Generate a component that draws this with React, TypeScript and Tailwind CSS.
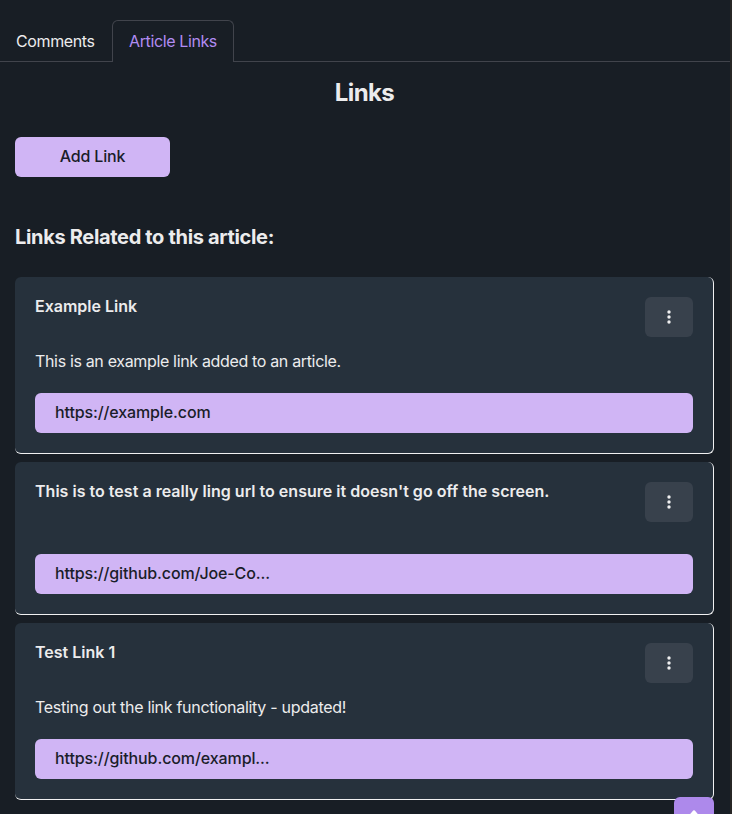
type Link = { title: string; description: string; url: string; titleClass: string; textClass: string; urlClass: string };

const links: Link[] = [
  {
    title: "Example Link",
    description: "This is an example link added to an article.",
    url: "https://example.com",
    titleClass: "tracking-normal",
    textClass: "tracking-[-0.34px]",
    urlClass: "tracking-[-0.12px]",
  },
  {
    title: "This is to test a really ling url to ensure it doesn't go off the screen.",
    description: "",
    url: "https://github.com/Joe-Co...",
    titleClass: "tracking-[0.02px]",
    textClass: "tracking-normal",
    urlClass: "tracking-[-0.12px]",
  },
  {
    title: "Test Link 1",
    description: "Testing out the link functionality - updated!",
    url: "https://github.com/exampl...",
    titleClass: "tracking-normal",
    textClass: "tracking-[-0.29px]",
    urlClass: "tracking-[-0.1px]",
  },
];

function MenuIcon() {
  return (
    <svg width="16" height="16" viewBox="0 0 16 16" fill="#f0f0f1" aria-hidden="true">
      <circle cx="8" cy="3" r="1.7" />
      <circle cx="8" cy="8" r="1.7" />
      <circle cx="8" cy="13" r="1.7" />
    </svg>
  );
}

function LinkCard({ link }: { link: Link }) {
  return (
    <article className="rounded-md border-r border-b border-[#f0f0f1] bg-[#26313c] p-5">
      <div className="flex h-10 items-start justify-between">
        <h3 className={`text-[16px] leading-[18px] font-semibold whitespace-nowrap ${link.titleClass}`}>{link.title}</h3>
        <button className="flex h-10 w-12 shrink-0 items-center justify-center rounded-md bg-[#38414c]" aria-label="Link options">
          <MenuIcon />
        </button>
      </div>
      {link.description ? (
        <p className={`mt-3 mb-5 h-6 text-[16px] leading-6 whitespace-nowrap ${link.textClass}`}>{link.description}</p>
      ) : (
        <div className="h-8" />
      )}
      <a className={`flex h-10 items-center rounded-md bg-[#d0b5f5] px-5 pb-0.5 text-[16px] leading-5 font-medium text-[#1a1d29] ${link.urlClass}`}>
        {link.url}
      </a>
    </article>
  );
}

export default function App() {
  return (
    <main className="relative h-[814px] w-[732px] overflow-hidden border-r-2 border-[#272625] bg-[#181e25] font-[Inter,sans-serif] text-[16px] text-[#ececed]">
      <nav className="flex h-[62px] items-end tracking-[-0.38px]">
        <div className="flex h-[42px] w-28 items-center border-b border-[#41444c] pl-4">Comments</div>
        <div className="flex h-[42px] w-[122px] items-center rounded-t-md border border-b-0 border-[#41444c] pb-0.5 pl-4 text-[#b18cf2]">Article Links</div>
        <div className="h-px flex-1 bg-[#41444c]" />
      </nav>
      <section className="pr-4 pl-[15px]">
        <h1 className="pt-4 text-center text-[24px] leading-[30px] font-[650] tracking-[-0.6px]">Links</h1>
        <button className="mt-[29px] flex h-10 w-[155px] items-center justify-center rounded-md bg-[#d0b5f5] pb-0.5 text-[16px] font-medium tracking-[-0.15px] text-[#1a1d29]">
          Add Link
        </button>
        <h2 className="mt-12 text-[20px] leading-6 font-[650] tracking-[-0.33px]">Links Related to this article:</h2>
        <div className="mt-7 flex flex-col gap-2">
          {links.map((link) => (
            <LinkCard key={link.title} link={link} />
          ))}
        </div>
      </section>
      <button className="absolute top-[797px] left-[674px] flex h-10 w-10 justify-center rounded-md bg-[#ad89eb] pt-[13px]" aria-label="Back to top">
        <svg width="16" height="16" viewBox="0 0 16 16" fill="#ffffff" aria-hidden="true">
          <path d="M7.2.6a1.1 1.1 0 0 1 1.6 0L14 6.5H2z" />
        </svg>
      </button>
    </main>
  );
}
